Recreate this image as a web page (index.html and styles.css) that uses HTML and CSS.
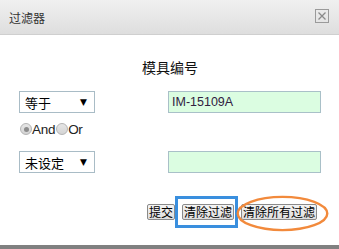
FILE: index.html
```html
<!DOCTYPE html>
<html lang="zh">
<head>
<meta charset="utf-8">
<title>过滤器</title>
<link rel="stylesheet" href="styles.css">
</head>
<body>
<div class="dialog">
  <div class="header">
    <span class="header-title">过滤器</span>
    <span class="close">
      <svg width="14" height="14" viewBox="0 0 14 14"><rect x="0.5" y="0.5" width="13" height="13" fill="none" stroke="#9a9a9a"/><path d="M3.5 3.5 L10.5 10.5 M10.5 3.5 L3.5 10.5" stroke="#8a8a8a" stroke-width="1.3"/></svg>
    </span>
  </div>
  <div class="content">
    <div class="field-title">模具编号</div>
    <div class="row row-first">
      <div class="select"><span>等于</span><span class="arrow">▼</span></div>
      <div class="input">IM-15109A</div>
    </div>
    <div class="radios">
      <span class="radio checked"></span><span class="radio-label">And</span><span class="radio"></span><span class="radio-label">Or</span>
    </div>
    <div class="row row-second">
      <div class="select"><span>未设定</span><span class="arrow">▼</span></div>
      <div class="input"></div>
    </div>
    <div class="buttons">
      <button class="btn">提交</button>
      <span class="mark-wrap">
        <button class="btn">清除过滤</button>
        <span class="box-mark"></span>
      </span>
      <span class="mark-wrap">
        <button class="btn">清除所有过滤</button>
        <svg class="ellipse-mark" width="93" height="37" viewBox="0 0 93 37"><ellipse cx="46.5" cy="18.5" rx="44.8" ry="16.6" fill="none" stroke="#f28a3c" stroke-width="2.4"/></svg>
      </span>
    </div>
  </div>
  <div class="footer-bar"></div>
</div>
</body>
</html>
```
FILE: styles.css
```css
html, body {
  margin: 0;
  padding: 0;
  background: #ffffff;
}
body {
  font-family: "Liberation Sans", "Noto Sans CJK SC", sans-serif;
  color: #222;
}
.dialog {
  width: 339px;
  height: 249px;
  display: flex;
  flex-direction: column;
  overflow: hidden;
}
.header {
  height: 34px;
  border-bottom: 1px solid #cfcfcf;
  background: linear-gradient(#f0f0f0, #dedede);
  display: flex;
  align-items: center;
  justify-content: space-between;
  padding: 0 10px 0 9px;
  flex: none;
}
.header-title {
  font-family: "Noto Sans CJK SC", sans-serif;
  font-size: 12px;
  color: #333;
}
.close {
  display: flex;
  width: 14px;
  height: 14px;
  margin-top: -3px;
}
.content {
  padding: 0 18px 0 19px;
  flex: 1;
}
.field-title {
  margin-top: 24px;
  text-align: center;
  font-family: "Noto Sans CJK SC", sans-serif;
  font-size: 14px;
  line-height: 16px;
  color: #111;
}
.row {
  display: flex;
  justify-content: space-between;
  height: 22px;
}
.row-first { margin-top: 16px; }
.row-second { margin-top: 15px; }
.select {
  box-sizing: border-box;
  width: 76px;
  height: 22px;
  border: 1px solid #a9bcc6;
  display: flex;
  align-items: center;
  justify-content: space-between;
  padding: 0 7px 0 5px;
  font-family: "Noto Sans CJK SC", sans-serif;
  font-size: 13px;
  color: #000;
}
.arrow {
  font-size: 9px;
  font-family: "DejaVu Sans", sans-serif;
}
.input {
  box-sizing: border-box;
  width: 153px;
  height: 22px;
  border: 1px solid #a9c0c8;
  background: #dbfde1;
  font-family: "Liberation Sans", sans-serif;
  font-size: 12.5px;
  line-height: 20px;
  padding-left: 3px;
  color: #302040;
}
.radios {
  margin-top: 9px;
  height: 14px;
  display: flex;
  align-items: center;
  font-family: "Liberation Sans", sans-serif;
  font-size: 13.5px;
  color: #222;
  letter-spacing: -0.3px;
}
.radio {
  box-sizing: border-box;
  width: 12px;
  height: 12px;
  border-radius: 50%;
  border: 1px solid #b4b4b4;
  background: linear-gradient(#e6e6e6, #d4d4d4);
  position: relative;
  margin-left: 1px;
}
.radio.checked::after {
  content: "";
  position: absolute;
  left: 2.5px;
  top: 2.5px;
  width: 5px;
  height: 5px;
  border-radius: 50%;
  background: #8c8c8c;
}
.radio-label {
  margin-right: 0;
}
.buttons {
  margin-top: 31px;
  display: flex;
  justify-content: flex-end;
  gap: 7px;
  padding-right: 4px;
}
.btn {
  font-family: "Noto Sans CJK SC", sans-serif;
  font-size: 12px;
  line-height: 14px;
  height: 16px;
  padding: 0 1px;
  margin: 0;
  border: 1px solid #8a8a8a;
  border-radius: 2px;
  background: linear-gradient(#f4f4f4, #dedede);
  color: #000;
  display: flex;
  align-items: center;
}
.mark-wrap {
  position: relative;
  display: flex;
}
.box-mark {
  position: absolute;
  left: -7px;
  top: -8px;
  right: -4px;
  bottom: -8px;
  border: 3px solid #3a8fde;
  box-sizing: border-box;
}
.ellipse-mark {
  position: absolute;
  left: -5px;
  top: -9px;
}
.footer-bar {
  height: 4px;
  background: #808080;
  flex: none;
}
```
